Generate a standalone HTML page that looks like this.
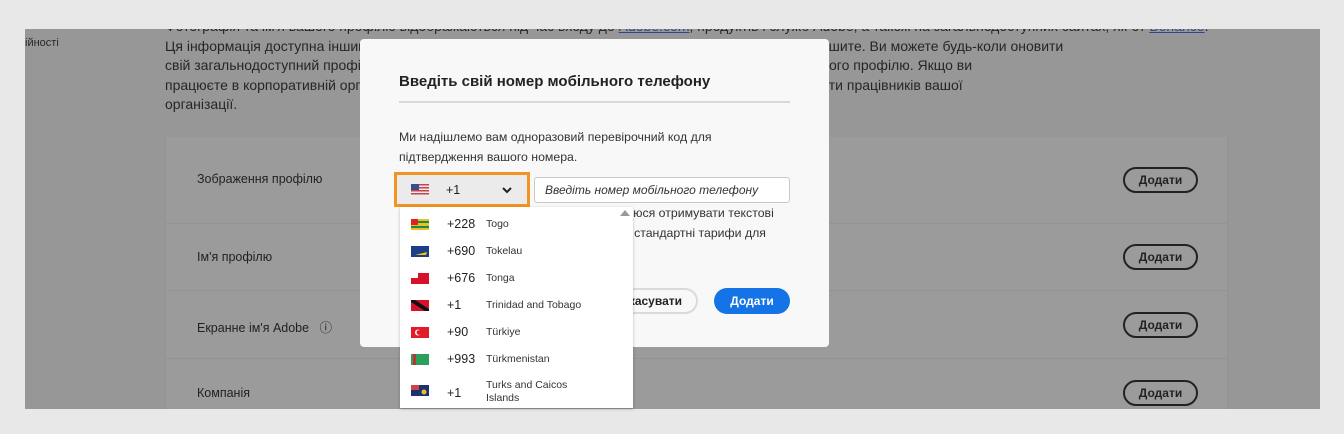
<!DOCTYPE html>
<html><head><meta charset="utf-8"><style>
*{margin:0;padding:0;box-sizing:border-box}
body{width:1344px;height:434px;background:#e8e8e8;position:relative;overflow:hidden;font-family:"Liberation Sans","DejaVu Sans",sans-serif;color:#222}
.ov{position:absolute;left:25px;top:29px;width:1295px;height:380px;background:#979797;overflow:hidden}
.txt{position:absolute;left:140px;top:-12px;font-size:14px;line-height:19.6px;color:#262626;white-space:nowrap}
.txt a{color:#2b4a8a;text-decoration:underline}
.side{position:absolute;left:0;top:8px;font-size:11px;color:#262626}
.card{position:absolute;left:140px;top:108px;width:1063px;height:300px;background:#9b9b9b;border-left:1px solid #939393;border-right:1px solid #939393}
.row{position:absolute;left:0;width:100%;border-top:1px solid #939393}
.row span{position:absolute;left:31px;font-size:12.5px;color:#222}
.btn{position:absolute;left:957px;width:75px;height:26px;border:2px solid #222;border-radius:13px;font-size:12px;font-weight:bold;text-align:center;line-height:22px;color:#222}
.modal{position:absolute;left:360px;top:39px;width:469px;height:308px;background:#f8f8f8;border-radius:4px}
.modal h2{position:absolute;left:39px;top:34px;font-size:15px;font-weight:bold;color:#222}
.hr{position:absolute;left:39px;top:62px;width:391px;height:2px;background:#d8d8d8}
.p{position:absolute;left:39px;top:89px;font-size:12.3px;line-height:19.5px;color:#333}
.p2{position:absolute;left:264px;top:165px;font-size:12.3px;line-height:19.5px;color:#333}
.sel{position:absolute;left:394px;top:172px;width:136px;height:35px;border:3px solid #f29423;background:#ebebeb}
.inp{position:absolute;left:534px;top:177px;width:256px;height:26px;border:1px solid #c8c8c8;border-radius:3px;background:#fff;font-size:12px;font-style:italic;line-height:24px;padding-left:10px;color:#333}
.dd{position:absolute;left:400px;top:207px;width:233px;height:201px;background:#fff;box-shadow:0 1px 3px rgba(0,0,0,.25)}
.it{position:absolute;left:0;width:100%;height:27px;font-size:12.5px}
.it .f{position:absolute;left:11px;top:8px;width:18px;height:11px}
.it .c{position:absolute;left:47px;top:6px;color:#222}
.it .n{position:absolute;left:86px;top:7px;font-size:10.5px;color:#333}
.b1{position:absolute;left:618px;top:288px;width:80px;height:26px;border:2px solid #dadada;border-radius:13px;background:#f8f8f8;font-size:12px;font-weight:bold;line-height:22px;text-align:right;padding-right:14px;color:#222}
.b2{position:absolute;left:714px;top:288px;width:76px;height:26px;border-radius:13px;background:#1473e6;color:#fff;font-size:12px;font-weight:bold;line-height:26px;text-align:center}
</style></head><body>
<div class="ov">
 <div class="side">ійності</div>
 <div class="txt">Фотографія та ім'я вашого профілю відображаються під час входу до <a>Adobe.com</a>, продуктів і служб Adobe, а також на загальнодоступних сайтах, як-от <a>Behance</a>.<br>Ця інформація доступна іншим користувачам, з якими ви співпрацюєте, для доступу, якщо ви так вирішите. Ви можете будь-коли оновити<br>свій загальнодоступний профіль. У вашому обліковому записі відображається фотографія та ім'я вашого профілю. Якщо ви<br>працюєте в корпоративній організації, де використовується посвідчення, визначене для спільної роботи працівників вашої<br>організації.</div>
 <div class="card">
  <div class="row" style="top:0;height:86px;border-top:none"><span style="top:35px">Зображення профілю</span><div class="btn" style="top:30px">Додати</div></div>
  <div class="row" style="top:86px;height:67px"><span style="top:26px">Ім'я профілю</span><div class="btn" style="top:20px">Додати</div></div>
  <div class="row" style="top:153px;height:68px"><span style="top:26px">Екранне ім'я Adobe &nbsp; ⓘ</span><div class="btn" style="top:21px">Додати</div></div>
  <div class="row" style="top:221px;height:80px"><span style="top:27px">Компанія</span><div class="btn" style="top:21px">Додати</div></div>
 </div>
</div>
<div class="modal">
 <h2>Введіть свій номер мобільного телефону</h2>
 <div class="hr"></div>
 <div class="p">Ми надішлемо вам одноразовий перевірочний код для<br>підтвердження вашого номера.</div>
 <div class="p2">ююся отримувати текстові<br>я стандартні тарифи для<br>х.</div>
</div>
<div class="b1">Скасувати</div>
<div class="b2">Додати</div>
<div class="sel">
 <svg style="position:absolute;left:14px;top:9px" width="18" height="11"><rect width="18" height="11" fill="#e9e9f0"/><rect y="0" width="18" height="1.5" fill="#c44"/><rect y="3" width="18" height="1.5" fill="#c44"/><rect y="6" width="18" height="1.5" fill="#c44"/><rect y="9" width="18" height="1.5" fill="#c44"/><rect width="8" height="6" fill="#3c4c8c"/></svg>
 <span style="position:absolute;left:49px;top:8px;font-size:12.5px">+1</span>
 <svg style="position:absolute;left:104px;top:11px" width="12" height="8"><path d="M2 2l4 4 4-4" stroke="#222" stroke-width="2" fill="none"/></svg>
</div>
<div class="inp">Введіть номер мобільного телефону</div>
<div class="dd">
 <svg style="position:absolute;left:220px;top:2px" width="10" height="7"><path d="M0 7L5 1 10 7z" fill="#999"/></svg>
 <div class="it" style="top:4px"><svg class="f"><rect width="18" height="11" fill="#e6c12a"/><rect y="2" width="18" height="2" fill="#1e8a3e"/><rect y="7" width="18" height="2" fill="#1e8a3e"/><rect width="7" height="6" fill="#d22"/></svg><span class="c">+228</span><span class="n">Togo</span></div>
 <div class="it" style="top:31px"><svg class="f"><rect width="18" height="11" fill="#1d3f8a"/><path d="M4 9L16 6 15 9z" fill="#f1c40f"/></svg><span class="c">+690</span><span class="n">Tokelau</span></div>
 <div class="it" style="top:58px"><svg class="f"><rect width="18" height="11" fill="#d8102a"/><rect width="7" height="5" fill="#fff"/></svg><span class="c">+676</span><span class="n">Tonga</span></div>
 <div class="it" style="top:85px"><svg class="f"><rect width="18" height="11" fill="#d8102a"/><path d="M0 0L4 0 18 9 18 11 14 11 0 2z" fill="#111"/></svg><span class="c">+1</span><span class="n">Trinidad and Tobago</span></div>
 <div class="it" style="top:112px"><svg class="f"><rect width="18" height="11" fill="#e21a2a"/><circle cx="7" cy="5.5" r="3" fill="#fff"/><circle cx="8" cy="5.5" r="2.4" fill="#e21a2a"/></svg><span class="c">+90</span><span class="n">Türkiye</span></div>
 <div class="it" style="top:139px"><svg class="f"><rect width="18" height="11" fill="#2aa05a"/><rect x="2" width="3" height="11" fill="#b33"/></svg><span class="c">+993</span><span class="n">Türkmenistan</span></div>
 <div class="it" style="top:170px;height:30px"><svg class="f"><rect width="18" height="11" fill="#1d3070"/><rect width="8" height="5" fill="#c44"/><circle cx="13" cy="7" r="2.5" fill="#e6c12a"/></svg><span class="c" style="top:9px">+1</span><span class="n" style="top:2px;line-height:13px">Turks and Caicos<br>Islands</span></div>
</div>
</body></html>
